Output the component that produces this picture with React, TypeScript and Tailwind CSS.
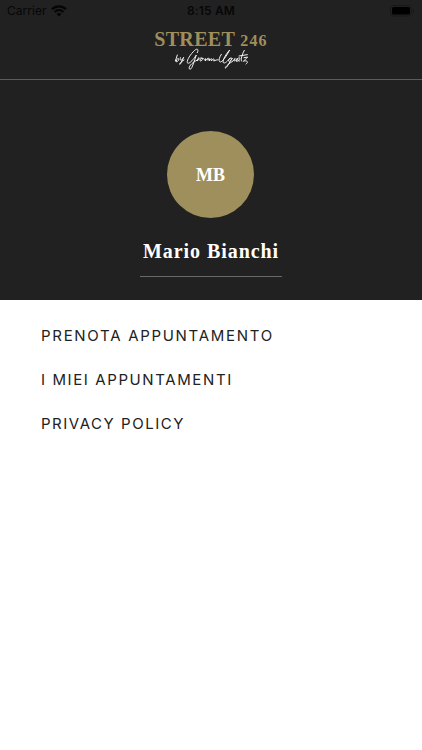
import React from 'react';

const menuItems = [
  { label: 'PRENOTA APPUNTAMENTO', spacing: 'tracking-[1.7px]' },
  { label: 'I MIEI APPUNTAMENTI', spacing: 'tracking-[1.6px]' },
  { label: 'PRIVACY POLICY', spacing: 'tracking-[1.53px]' },
];

const WifiIcon: React.FC = () => (
  <svg className="w-4 h-3" viewBox="0 0 16 12" fill="none" stroke="#050505" strokeWidth="2.2">
    <path d="M1 4.2C5 0.3 11 0.3 15 4.2" />
    <path d="M3.6 7C6.2 4.6 9.8 4.6 12.4 7" />
    <path d="M5.6 9C7 7.7 9 7.7 10.4 9L8 11.4Z" fill="#050505" stroke="none" />
  </svg>
);

const BatteryIcon: React.FC = () => (
  <svg className="w-[25px] h-3" viewBox="0 0 25 12">
    <rect x="0.5" y="0.5" width="21" height="10.5" rx="3" fill="none" stroke="#181818" />
    <rect x="2" y="2" width="18" height="7.5" rx="1.5" fill="#000" />
    <path d="M23 4v4c1.4-.5 1.4-3.5 0-4Z" fill="#151515" />
  </svg>
);

const Signature: React.FC = () => (
  <svg
    className="w-20 h-7"
    viewBox="0 0 240 84"
    fill="none"
    stroke="#f2f2f2"
    strokeWidth="3"
    strokeLinecap="round"
    strokeLinejoin="round"
    aria-label="Signature"
  >
    <path d="M19 27L13 45C17 51 25 43 23 38C20 35 16 42 16 45" />
    <path d="M28 35C26 45 31 46 38 34L29 53C23 59 24 50 39 42" />
    <path d="M79 20C84 10 79 6 71 13C59 24 47 42 49 50C53 57 67 41 76 27C70 42 64 69 57 70C50 67 57 53 79 42" />
    <path d="M83 35L78 45L86 38C95 31 98 40 90 45C84 46 87 36 95 37C101 38 98 43 104 38L102 45L112 36C110 44 109 46 116 38L115 45C121 36 125 36 121 45C127 36 132 37 128 45C134 43 137 41 141 41" />
    <path d="M151 25C144 35 141 48 149 48C158 45 171 21 176 12C162 28 152 47 158 51C166 52 173 40 177 36" />
    <path d="M181 36C172 36 170 48 176 46C181 44 184 36 184 36L168 62C160 72 157 64 186 45L192 37C188 48 190 48 199 37L196 46C202 47 210 36 205 35C198 35 198 47 206 45" />
    <path d="M220 13C213 25 207 45 212 46M204 30L229 26" />
    <path d="M219 35L230 33L217 46C227 42 235 47 225 54" />
  </svg>
);

const App: React.FC = () => {
  return (
    <div className="w-full h-[750px] overflow-hidden bg-white">
      <div className="h-[300px] bg-[#212121]">
        {/* Status bar */}
        <div className="grid grid-cols-3 items-center h-[22px] px-[7px] font-['Inter',sans-serif] text-[#070707]">
          <div className="flex items-center gap-1">
            <span className="text-[12px] tracking-[0.05px]">Carrier</span>
            <WifiIcon />
          </div>
          <span className="text-center text-[12px] font-semibold tracking-[0.15px]">8:15 AM</span>
          <div className="flex justify-end">
            <BatteryIcon />
          </div>
        </div>

        {/* Brand */}
        <header className="flex flex-col items-center h-[58px] border-b border-[#5c5c5c] font-['Liberation_Serif',serif] font-bold text-[#a08f5c]">
          <div className="flex items-baseline gap-[5px] h-6 leading-[34px] whitespace-nowrap">
            <span className="text-[20px] tracking-[0.35px]">STREET</span>
            <span className="text-[16px] tracking-[1.2px]">246</span>
          </div>
          <Signature />
        </header>

        {/* Profile */}
        <div className="flex flex-col items-center pt-[51px] font-['Liberation_Serif',serif] text-white">
          <div className="flex items-center justify-center w-[87px] h-[87px] pt-0.5 mr-px rounded-full bg-[#9f8f5c] text-[18px] font-bold">
            MB
          </div>
          <h1 className="mt-[17px] h-[42px] w-[142px] border-b border-[#686868] text-center text-[20px] leading-[33px] font-bold tracking-[0.95px] whitespace-nowrap">
            Mario Bianchi
          </h1>
        </div>
      </div>

      <nav className="flex flex-col pl-[41px] pt-[14px] font-['Inter',sans-serif] text-[15px] text-[#222]">
        {menuItems.map((item) => (
          <a key={item.label} className={`flex items-center h-11 ${item.spacing}`}>
            {item.label}
          </a>
        ))}
      </nav>
    </div>
  );
};

export default App;
